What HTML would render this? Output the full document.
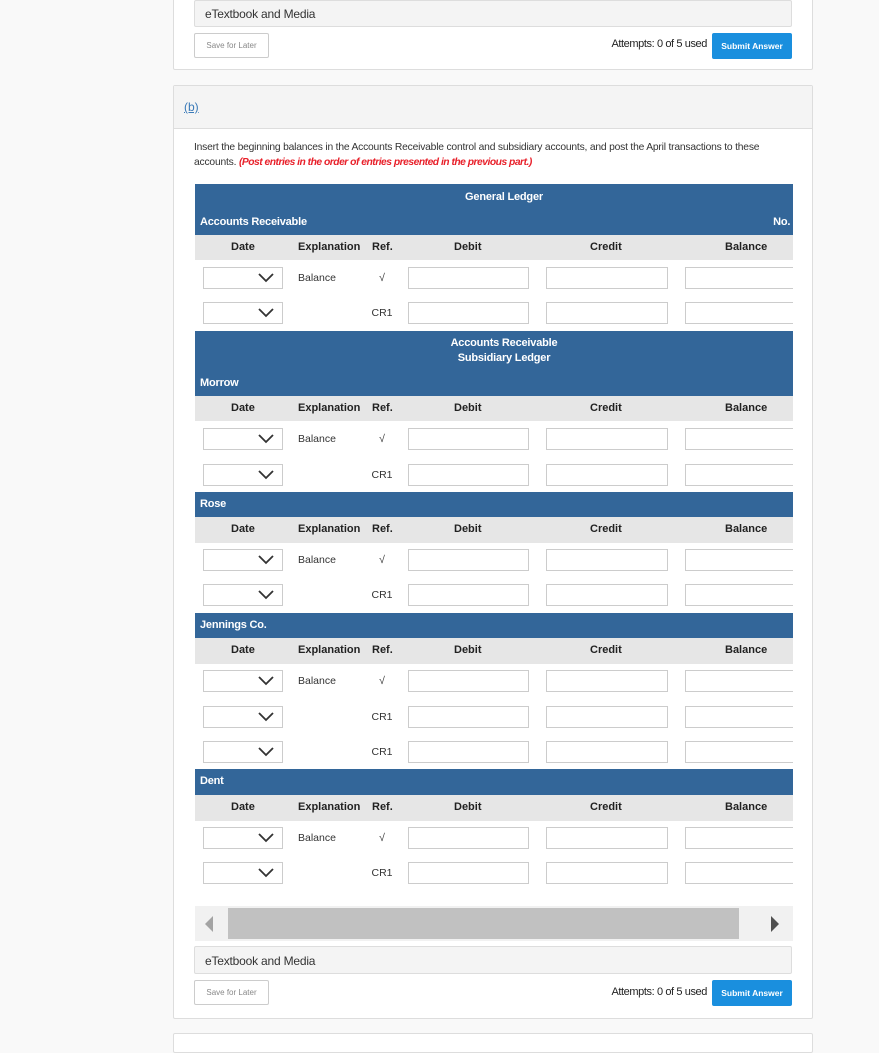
<!DOCTYPE html>
<html><head><meta charset="utf-8"><style>
*{box-sizing:border-box;margin:0;padding:0}
body{width:879px;height:1040px;background:#f9f9f9;position:relative;overflow:hidden;font-family:"Liberation Sans",sans-serif;color:#333}
.card{position:absolute;left:173px;width:640px;background:#fff;border:1px solid #ddd;border-radius:2px}
.etb{position:absolute;left:194px;width:598px;height:27px;background:#f4f4f4;border:1px solid #ddd;border-radius:2px;font-size:12px;padding:6px 10px;color:#333;letter-spacing:-0.2px}
.save{position:absolute;left:194px;width:75px;height:25px;border:1px solid #ccc;border-radius:2px;background:#fff;font-size:8px;color:#888;text-align:center;line-height:23px}
.sub{position:absolute;left:712px;width:80px;height:26px;background:#1a8fde;border-radius:2px;color:#fff;font-size:8.5px;font-weight:bold;text-align:center;line-height:26px}
.att{position:absolute;right:172px;font-size:11px;color:#222;letter-spacing:-0.4px}
.blue{position:absolute;left:195px;width:598px;background:#336699;color:#fff;font-weight:bold;font-size:11px;letter-spacing:-0.2px}
.gh{position:absolute;left:195px;width:598px;height:25px;background:#e6e6e6;font-size:11px;font-weight:bold;color:#222}
.gh span{position:absolute;top:6px}
.r{position:absolute;left:0;width:879px;height:22px}
.sel{position:absolute;left:203px;width:80px;height:22px;border:1px solid #ccc;background:#fff}
.sel svg{position:absolute;left:54px;top:5px}
.ex{position:absolute;left:298px;top:5px;font-size:10.5px;color:#333}
.rf{position:absolute;left:362px;width:40px;text-align:center;top:5px;font-size:10.5px;color:#333}
.i{position:absolute;height:22px;border:1px solid #ccc;background:#fff}
.d{left:408px;width:121px}.c{left:546px;width:122px}.b{left:685px;width:108px;border-right:none}
</style></head><body>
<div class="card" style="top:-5px;height:75px"></div>
<div class="etb" style="top:0px">eTextbook and Media</div>
<div class="save" style="top:33px">Save for Later</div>
<div class="att" style="top:38px">Attempts: 0 of 5 used</div>
<div class="sub" style="top:33px">Submit Answer</div>

<div class="card" style="top:85px;height:934px"></div>
<div style="position:absolute;left:174px;top:86px;width:638px;height:43px;background:#f4f4f4;border-bottom:1px solid #ddd"></div>
<div style="position:absolute;left:184px;top:100px;font-size:12px;color:#3a7ab8;text-decoration:underline">(b)</div>
<div style="position:absolute;left:194px;top:140px;width:600px;font-size:10.3px;line-height:15px;color:#333;letter-spacing:-0.2px">Insert the beginning balances in the Accounts Receivable control and subsidiary accounts, and post the April transactions to these accounts. <i style="color:#e8202a;font-weight:bold;letter-spacing:-0.5px">(Post entries in the order of entries presented in the previous part.)</i></div>

<svg width="0" height="0" style="position:absolute"><defs><symbol id="ch" viewBox="0 0 16 10"><path d="M1 1 L8 8 L15 1" fill="none" stroke="#333" stroke-width="1.8"/></symbol></defs></svg>

<div class="blue" style="top:184px;height:51px"><div style="position:absolute;top:7px;width:100%;text-align:center;padding-left:20px">General Ledger</div><div style="position:absolute;top:32px;left:5px">Accounts Receivable</div><div style="position:absolute;top:32px;right:-6px">No. 1</div></div>
<div class="gh" style="top:235px"><span style="left:36px">Date</span><span style="left:103px">Explanation</span><span style="left:177px">Ref.</span><span style="left:259px">Debit</span><span style="left:395px">Credit</span><span style="left:530px">Balance</span></div>
<div class="r" style="top:267px"><div class="sel"><svg width="16" height="10"><use href="#ch"/></svg></div><span class="ex">Balance</span><span class="rf">√</span><div class="i d"></div><div class="i c"></div><div class="i b"></div></div>
<div class="r" style="top:302px"><div class="sel"><svg width="16" height="10"><use href="#ch"/></svg></div><span class="rf">CR1</span><div class="i d"></div><div class="i c"></div><div class="i b"></div></div>

<div class="blue" style="top:331px;height:65px"><div style="position:absolute;top:5px;width:100%;text-align:center;line-height:15px;padding-left:20px">Accounts Receivable<br>Subsidiary Ledger</div><div style="position:absolute;top:46px;left:5px">Morrow</div></div>
<div class="gh" style="top:396px"><span style="left:36px">Date</span><span style="left:103px">Explanation</span><span style="left:177px">Ref.</span><span style="left:259px">Debit</span><span style="left:395px">Credit</span><span style="left:530px">Balance</span></div>
<div class="r" style="top:428px"><div class="sel"><svg width="16" height="10"><use href="#ch"/></svg></div><span class="ex">Balance</span><span class="rf">√</span><div class="i d"></div><div class="i c"></div><div class="i b"></div></div>
<div class="r" style="top:464px"><div class="sel"><svg width="16" height="10"><use href="#ch"/></svg></div><span class="rf">CR1</span><div class="i d"></div><div class="i c"></div><div class="i b"></div></div>

<div class="blue" style="top:492px;height:25px"><div style="position:absolute;top:6px;left:5px">Rose</div></div>
<div class="gh" style="top:517px;height:26px"><span style="left:36px">Date</span><span style="left:103px">Explanation</span><span style="left:177px">Ref.</span><span style="left:259px">Debit</span><span style="left:395px">Credit</span><span style="left:530px">Balance</span></div>
<div class="r" style="top:549px"><div class="sel"><svg width="16" height="10"><use href="#ch"/></svg></div><span class="ex">Balance</span><span class="rf">√</span><div class="i d"></div><div class="i c"></div><div class="i b"></div></div>
<div class="r" style="top:584px"><div class="sel"><svg width="16" height="10"><use href="#ch"/></svg></div><span class="rf">CR1</span><div class="i d"></div><div class="i c"></div><div class="i b"></div></div>

<div class="blue" style="top:613px;height:25px"><div style="position:absolute;top:6px;left:5px">Jennings Co.</div></div>
<div class="gh" style="top:638px;height:26px"><span style="left:36px">Date</span><span style="left:103px">Explanation</span><span style="left:177px">Ref.</span><span style="left:259px">Debit</span><span style="left:395px">Credit</span><span style="left:530px">Balance</span></div>
<div class="r" style="top:670px"><div class="sel"><svg width="16" height="10"><use href="#ch"/></svg></div><span class="ex">Balance</span><span class="rf">√</span><div class="i d"></div><div class="i c"></div><div class="i b"></div></div>
<div class="r" style="top:706px"><div class="sel"><svg width="16" height="10"><use href="#ch"/></svg></div><span class="rf">CR1</span><div class="i d"></div><div class="i c"></div><div class="i b"></div></div>
<div class="r" style="top:741px"><div class="sel"><svg width="16" height="10"><use href="#ch"/></svg></div><span class="rf">CR1</span><div class="i d"></div><div class="i c"></div><div class="i b"></div></div>

<div class="blue" style="top:769px;height:26px"><div style="position:absolute;top:6px;left:5px">Dent</div></div>
<div class="gh" style="top:795px;height:26px"><span style="left:36px">Date</span><span style="left:103px">Explanation</span><span style="left:177px">Ref.</span><span style="left:259px">Debit</span><span style="left:395px">Credit</span><span style="left:530px">Balance</span></div>
<div class="r" style="top:827px"><div class="sel"><svg width="16" height="10"><use href="#ch"/></svg></div><span class="ex">Balance</span><span class="rf">√</span><div class="i d"></div><div class="i c"></div><div class="i b"></div></div>
<div class="r" style="top:862px"><div class="sel"><svg width="16" height="10"><use href="#ch"/></svg></div><span class="rf">CR1</span><div class="i d"></div><div class="i c"></div><div class="i b"></div></div>

<div style="position:absolute;left:195px;top:906px;width:598px;height:35px;background:#f1f1f1"></div>
<div style="position:absolute;left:228px;top:908px;width:511px;height:31px;background:#c1c1c1"></div>
<svg style="position:absolute;left:205px;top:916px" width="10" height="16"><path d="M8 0 L0 8 L8 16Z" fill="#a3a3a3"/></svg>
<svg style="position:absolute;left:771px;top:916px" width="10" height="16"><path d="M0 0 L8 8 L0 16Z" fill="#505050"/></svg>

<div class="etb" style="top:946px;height:28px;padding-top:7px">eTextbook and Media</div>
<div class="save" style="top:980px">Save for Later</div>
<div class="att" style="top:986px">Attempts: 0 of 5 used</div>
<div class="sub" style="top:980px">Submit Answer</div>

<div class="card" style="top:1033px;height:20px"></div>
</body></html>
